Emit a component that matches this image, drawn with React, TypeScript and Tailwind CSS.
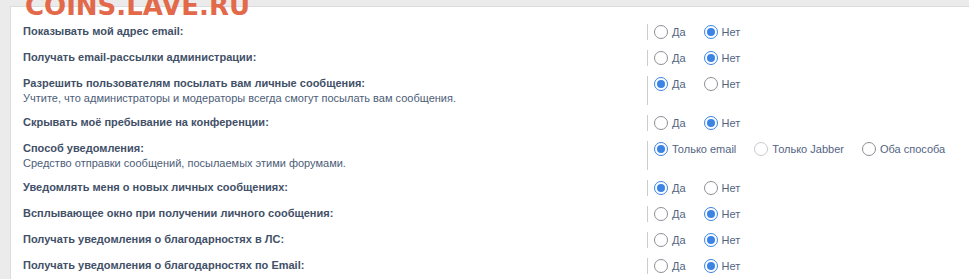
type Opt = { label: string; checked?: boolean; disabled?: boolean };

type Row = { title: string; desc?: string; options: Opt[] };

const yesNo = (yes: boolean): Opt[] => [
  { label: 'Да', checked: yes },
  { label: 'Нет', checked: !yes },
];

const rows: Row[] = [
  { title: 'Показывать мой адрес email:', options: yesNo(false) },
  { title: 'Получать email-рассылки администрации:', options: yesNo(false) },
  {
    title: 'Разрешить пользователям посылать вам личные сообщения:',
    desc: 'Учтите, что администраторы и модераторы всегда смогут посылать вам сообщения.',
    options: yesNo(true),
  },
  { title: 'Скрывать моё пребывание на конференции:', options: yesNo(false) },
  {
    title: 'Способ уведомления:',
    desc: 'Средство отправки сообщений, посылаемых этими форумами.',
    options: [
      { label: 'Только email', checked: true },
      { label: 'Только Jabber', disabled: true },
      { label: 'Оба способа' },
    ],
  },
  { title: 'Уведомлять меня о новых личных сообщениях:', options: yesNo(true) },
  { title: 'Всплывающее окно при получении личного сообщения:', options: yesNo(false) },
  { title: 'Получать уведомления о благодарностях в ЛС:', options: yesNo(false) },
  { title: 'Получать уведомления о благодарностях по Email:', options: yesNo(false) },
];

function Radio({ checked, disabled }: { checked?: boolean; disabled?: boolean }) {
  if (checked) {
    return (
      <span className="flex h-[14px] w-[14px] shrink-0 items-center justify-center rounded-full border border-[#3b83e4] bg-white">
        <span className="h-[8px] w-[8px] rounded-full bg-[#3b83e4]" />
      </span>
    );
  }
  return (
    <span
      className={`h-[14px] w-[14px] shrink-0 rounded-full border bg-white ${
        disabled ? 'border-[#c9c9cf]' : 'border-[#8e8e98]'
      }`}
    />
  );
}

export default function App() {
  return (
    <div className="relative min-h-[279px] overflow-hidden bg-[#ebebeb] pt-[6px] pl-[10px] font-['Liberation_Sans',Arial,sans-serif]">
      {/* watermark */}
      <div className="absolute left-[25px] top-[-7px] font-['DejaVu_Sans',sans-serif] text-[26px] font-bold leading-[26px] text-[#e2694a]">
        COINS.LAVE.RU
      </div>

      <div className="min-h-[273px] border-t border-l border-[#dcdcdc] bg-white pt-[12px]">
        {rows.map((row) => (
          <div key={row.title} className="flex items-start py-[5px]">
            <div className="w-[636px] shrink-0 pl-[12px]">
              <div className="text-[11px] font-bold leading-[15px] text-[#425067]">{row.title}</div>
              {row.desc && (
                <div className="text-[11px] leading-[14px] text-[#4c5d77]">{row.desc}</div>
              )}
            </div>
            <div
              className={`flex items-start border-l border-[#cccccc] pl-[6px] ${
                row.desc ? 'h-[29px]' : 'h-[16px]'
              }`}
            >
              {row.options.map((o) => (
                <label key={o.label} className="mr-[18px] flex h-[16px] items-center gap-[4px]">
                  <Radio checked={o.checked} disabled={o.disabled} />
                  <span className="text-[11px] leading-[14px] text-[#536482]">{o.label}</span>
                </label>
              ))}
            </div>
          </div>
        ))}
      </div>
    </div>
  );
}
